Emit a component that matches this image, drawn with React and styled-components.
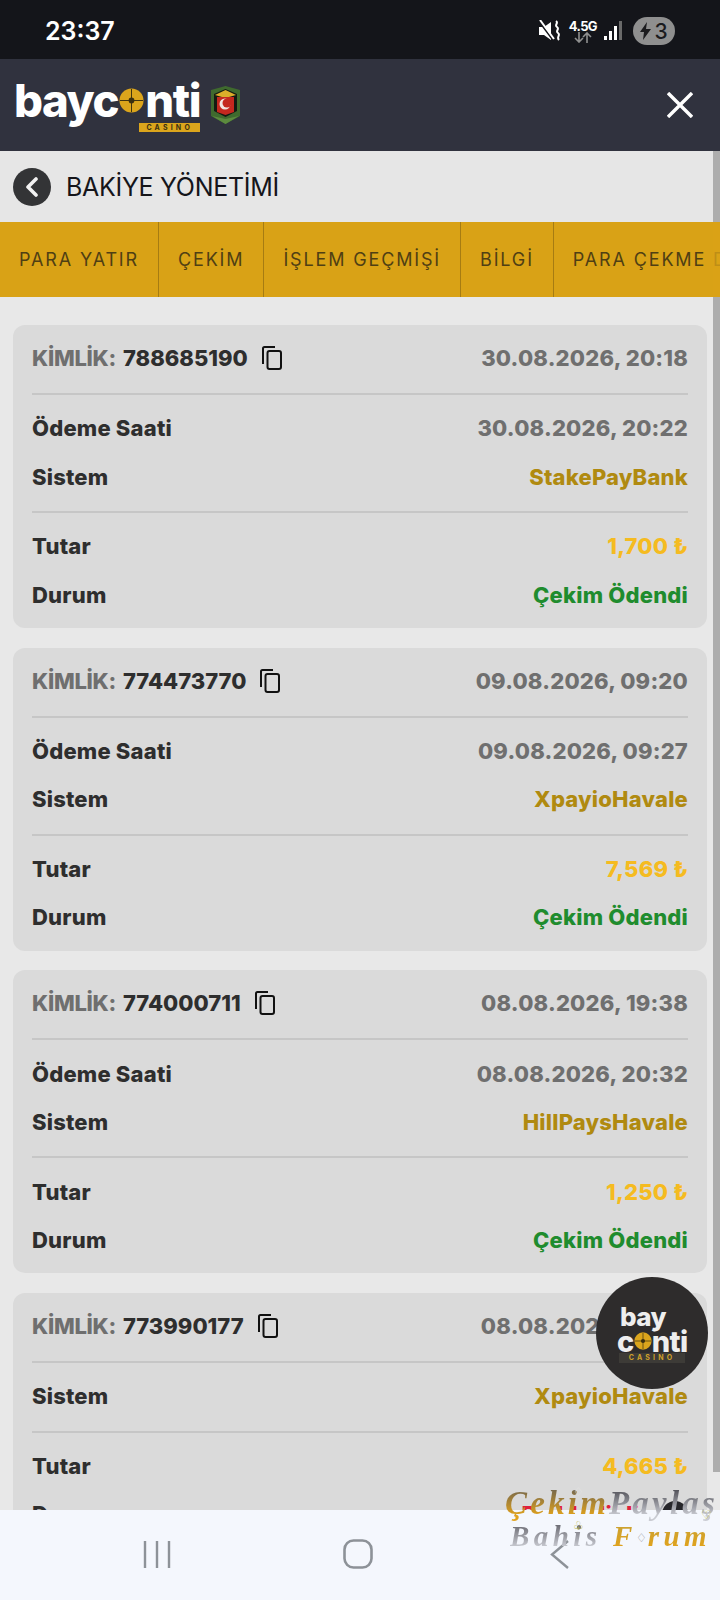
import React from 'react';
import styled, { createGlobalStyle } from 'styled-components';

const GlobalStyle = createGlobalStyle`
	html, body {
		margin: 0;
		padding: 0;
		background: #e8e8e8;
		overflow: hidden;
	}
	* {
		box-sizing: border-box;
	}
`;

const Phone = styled.div`
	position: relative;
	display: flex;
	flex-direction: column;
	width: 720px;
	height: 1600px;
	overflow: hidden;
	font-family: Inter, "Noto Sans", sans-serif;
	background: #e8e8e8;
`;

const StatusBar = styled.div`
	display: flex;
	align-items: center;
	justify-content: space-between;
	height: 59px;
	padding: 3px 45px 0 45px;
	background: #14151a;
	color: #fff;
`;

const Clock = styled.span`
	font-size: 25px;
	font-weight: 600;
`;

const StatusIcons = styled.div`
	display: flex;
	align-items: center;
	gap: 7px;
`;

const NetType = styled.div`
	display: flex;
	flex-direction: column;
	align-items: center;
	margin-left: 2px;
	font-size: 13px;
	font-weight: 700;
	line-height: 12px;
	letter-spacing: -0.6px;
`;

const BatteryPill = styled.div`
	display: flex;
	align-items: center;
	justify-content: center;
	gap: 3px;
	width: 42px;
	height: 28px;
	margin-left: 3px;
	border-radius: 14px;
	background: #8f8f8f;
	color: #1b1b1e;
	font-size: 21px;
	font-weight: 500;
`;

const Header = styled.header`
	display: flex;
	align-items: center;
	justify-content: space-between;
	height: 92px;
	padding: 0 27px 0 14px;
	background: #30323e;
`;

const LogoRow = styled.div`
	display: flex;
	align-items: center;
	gap: 10px;
`;

const LogoStack = styled.div`
	display: flex;
	flex-direction: column;
	align-items: flex-end;
`;

const LogoWord = styled.div`
	display: flex;
	align-items: center;
	height: 44px;
	color: #fff;
	font-size: 45.5px;
	font-weight: 800;
	letter-spacing: -1.4px;
	line-height: 1;
	svg {
		margin: 0 1px;
	}
`;

const CasinoTag = styled.div`
	width: 61px;
	height: 9px;
	background: #dba51c;
	color: #3a3010;
	font-size: 7px;
	font-weight: 700;
	line-height: 9px;
	letter-spacing: 3.2px;
	text-align: center;
`;

const TitleBar = styled.div`
	display: flex;
	align-items: center;
	gap: 15px;
	height: 71px;
	padding: 0 13px;
	background: #e6e6e6;
	color: #15151a;
	font-size: 25px;
	font-weight: 400;
	letter-spacing: -0.3px;
`;

const BackButton = styled.div`
	display: flex;
	align-items: center;
	justify-content: center;
	width: 38px;
	height: 38px;
	border-radius: 50%;
	background: #333436;
`;

const Tabs = styled.nav`
	position: relative;
	z-index: 2;
	display: flex;
	height: 75px;
	overflow: hidden;
	background: #d9a216;

	&::after {
		content: '';
		position: absolute;
		top: 0;
		right: 0;
		width: 7px;
		height: 100%;
		background: #d9a216;
		opacity: 0.8;
	}
`;

const Tab = styled.div`
	display: flex;
	flex-shrink: 0;
	align-items: center;
	padding: 0 19px;
	border-right: 1px solid #a67c12;
	color: #4f3f14;
	font-size: 18px;
	letter-spacing: 1.85px;
	white-space: nowrap;
`;

const List = styled.main`
	display: flex;
	flex: 1;
	flex-direction: column;
	gap: 19.7px;
	min-height: 0;
	padding: 28px 13px 0;
	overflow: hidden;
`;

const Card = styled.section`
	flex-shrink: 0;
	height: 303px;
	padding: 0 19px;
	border-radius: 12px;
	background: #dadada;
`;

const CardHead = styled.div`
	display: flex;
	align-items: center;
	justify-content: space-between;
	height: 68px;
	padding-bottom: 2px;
	font-size: 22px;
	font-weight: 800;
	letter-spacing: 0.2px;
`;

const IdBlock = styled.div`
	display: flex;
	align-items: center;
`;

const IdLabel = styled.span`
	margin-right: 7px;
	color: #6f6f6f;
	letter-spacing: -0.3px;
`;

const IdValue = styled.span`
	margin-right: 14px;
	color: #2e2e2e;
	letter-spacing: 0;
`;

const Group = styled.div`
	padding: 9px 0 10px;
	border-top: 2px solid #c6c6c6;
`;

const Row = styled.div`
	display: flex;
	align-items: center;
	justify-content: space-between;
	height: 48.500px;
	font-size: 22px;
	font-weight: 800;
	letter-spacing: 0.2px;
`;

const RowLabel = styled.span`
	color: #2e2e2e;
`;

const RowValue = styled.span`
	display: flex;
	align-items: center;
	color: ${p => p.$color};
`;

const InfoDot = styled.span`
	width: 26px;
	height: 26px;
	margin-left: 23px;
	border-radius: 50%;
	background: #26262a;
`;

const ScrollThumb = styled.div`
	position: absolute;
	top: 151px;
	right: 0;
	z-index: 1;
	width: 7px;
	height: 1321px;
	background: #adadad;
`;

const Bubble = styled.div`
	position: absolute;
	top: 1277px;
	left: 596px;
	z-index: 3;
	display: flex;
	flex-direction: column;
	align-items: center;
	justify-content: center;
	width: 112px;
	height: 112px;
	padding-top: 2px;
	border-radius: 50%;
	background: #2e2c2c;
`;

const BubbleWord = styled(LogoWord)`
	align-self: flex-start;
	height: 24px;
	margin-left: ${p => p.$indent}px;
	color: #eeeeee;
	font-size: ${p => p.$size}px;
	letter-spacing: -0.6px;
	svg {
		margin: 0;
	}
`;

const BubbleTag = styled.div`
	width: 66px;
	height: 10px;
	background: #3d3b37;
	color: #cfa12a;
	font-size: 7px;
	font-weight: 700;
	line-height: 10px;
	letter-spacing: 3.2px;
	text-align: center;
`;

const BottomNav = styled.footer`
	position: relative;
	z-index: 4;
	display: flex;
	align-items: center;
	justify-content: space-between;
	height: 90px;
	padding: 0 150px 2px 143px;
	background: #f4f7fd;
`;

const HomeIcon = styled.svg`
	margin-right: 5px;
`;

const Watermark = styled.div`
	position: absolute;
	top: 1485px;
	left: 505px;
	z-index: 5;
	display: flex;
	flex-direction: column;
	width: 215px;
	font-family: "Liberation Serif", serif;
	font-style: italic;
	font-weight: 700;
	pointer-events: none;
`;

const MarkLine = styled.div`
	height: ${p => (p.$second ? '30px' : '36px')};
	padding-left: ${p => (p.$second ? '5px' : '0')};
	font-size: ${p => (p.$second ? '29px' : '33px')};
	letter-spacing: ${p => (p.$second ? '4.4px' : '3.2px')};
	line-height: ${p => (p.$second ? '30px' : '36px')};
	white-space: pre;
`;

const MarkWord = styled.span`
	background: linear-gradient(180deg, ${p => p.$from} 15%, ${p => p.$to} 85%);
	-webkit-background-clip: text;
	background-clip: text;
	color: transparent;
`;

const Suit = styled.span`
	position: absolute;
	top: ${p => p.$y}px;
	left: ${p => p.$x}px;
	color: ${p => p.$color};
	font-family: "DejaVu Sans", sans-serif;
	font-size: 12px;
	font-style: normal;
	font-weight: 400;
	line-height: 1;
`;

const Coin = ({ size }) => (
	<svg width={size} height={size} viewBox="0 0 26 26">
		<circle cx="13" cy="13" r="12.5" fill="#dba51c" />
		<circle cx="13" cy="13" r="3" fill="#3a3010" />
		<path d="M13 1v24M1 13h24" stroke="#3a3010" strokeWidth="1" />
	</svg>
);

const Emblem = () => (
	<svg width="31" height="38" viewBox="0 0 31 38">
		<path d="M1 4 15.500 0 30 4v26l-14.500 8L1 30z" fill="#3f6a2e" />
		<path d="M4 8 15.500 3 27 8v17l-11.500 6L4 25z" fill="#141a12" />
		<path d="M5 9 15.500 4 26 9l-10.500 3z" fill="#dcae2a" />
		<path d="M7 11h17v15l-8.500 3L7 26z" fill="#c4281f" />
		<circle cx="15" cy="18" r="5.500" fill="#f2e6e2" />
		<circle cx="17" cy="17" r="4.500" fill="#c4281f" />
		<path d="M2 30l13.500 8L29 30l-13.500 3z" fill="#5c8a3e" />
	</svg>
);

const CopyIcon = () => (
	<svg width="20" height="24" viewBox="0 0 20 24" fill="none" stroke="#111" strokeWidth="2">
		<path d="M13 1H2.500A1.500 1.500 0 0 0 1 2.500V18" />
		<rect x="5.500" y="5" width="13.500" height="18" rx="2" />
	</svg>
);

const rows = [
	{
		id: '788685190',
		date: '30.08.2026, 20:18',
		paid: '30.08.2026, 20:22',
		system: 'StakePayBank',
		amount: '1,700 ₺',
		status: 'Çekim Ödendi',
	},
	{
		id: '774473770',
		date: '09.08.2026, 09:20',
		paid: '09.08.2026, 09:27',
		system: 'XpayioHavale',
		amount: '7,569 ₺',
		status: 'Çekim Ödendi',
	},
	{
		id: '774000711',
		date: '08.08.2026, 19:38',
		paid: '08.08.2026, 20:32',
		system: 'HillPaysHavale',
		amount: '1,250 ₺',
		status: 'Çekim Ödendi',
	},
	{
		id: '773990177',
		date: '08.08.2026, 19:20',
		system: 'XpayioHavale',
		amount: '4,665 ₺',
		status: 'Reddedildi',
		rejected: true,
	},
];

const App = () => {
	return (
		<Phone>
			<GlobalStyle />
			<StatusBar>
				<Clock>23:37</Clock>
				<StatusIcons>
					<svg width="21" height="22" viewBox="0 0 21 22" fill="#fff">
						<path d="M0 7h5l7-5v18l-7-5H0z" />
						<path d="M0 1l14 19" stroke="#14151a" strokeWidth="2" />
						<path d="M1 0l14 19" stroke="#fff" strokeWidth="2" />
						<path d="M17 1c3 2-2 4 1 6s-2 4 1 6-2 4 1 7" fill="none" stroke="#fff" strokeWidth="2" />
					</svg>
					<NetType>
						4.5G
						<svg width="18" height="11" viewBox="0 0 18 11" fill="none" stroke="#8f8f8f" strokeWidth="1.600">
							<path d="M5 0v10M1 6l4 4 4-4M13 11V1M9 5l4-4 4 4" />
						</svg>
					</NetType>
					<svg width="19" height="20" viewBox="0 0 19 20">
						<rect x="0" y="15" width="3" height="4" fill="#fff" />
						<rect x="5" y="10" width="3" height="9" fill="#fff" />
						<rect x="10" y="5" width="3" height="14" fill="#fff" />
						<rect x="15" y="0" width="3" height="19" fill="#6a6a6a" />
					</svg>
					<BatteryPill>
						<svg width="11" height="18" viewBox="0 0 11 18" fill="#1b1b1e">
							<path d="M7 0 0 10h4l-1 8 8-11H6z" />
						</svg>
						3
					</BatteryPill>
				</StatusIcons>
			</StatusBar>

			<Header>
				<LogoRow>
					<LogoStack>
						<LogoWord>
							bayc<Coin size={25} />nti
						</LogoWord>
						<CasinoTag>CASINO</CasinoTag>
					</LogoStack>
					<Emblem />
				</LogoRow>
				<svg width="26" height="26" viewBox="0 0 26 26" stroke="#fff" strokeWidth="3.400">
					<path d="M1 1l24 24M25 1 1 25" />
				</svg>
			</Header>

			<TitleBar>
				<BackButton>
					<svg width="14" height="20" viewBox="0 0 14 20" fill="none" stroke="#f2f2f2" strokeWidth="3.600" strokeLinecap="round" strokeLinejoin="round">
						<path d="M11 2 3 10l8 8" />
					</svg>
				</BackButton>
				BAKİYE YÖNETİMİ
			</TitleBar>

			<Tabs>
				<Tab>PARA YATIR</Tab>
				<Tab>ÇEKİM</Tab>
				<Tab>İŞLEM GEÇMİŞİ</Tab>
				<Tab>BİLGİ</Tab>
				<Tab>PARA ÇEKME DURUMU</Tab>
			</Tabs>

			<List>
				{rows.map(row => (
					<Card key={row.id}>
						<CardHead>
							<IdBlock>
								<IdLabel>KİMLİK:</IdLabel>
								<IdValue>{row.id}</IdValue>
								<CopyIcon />
							</IdBlock>
							<RowValue $color="#6f6f6f">{row.date}</RowValue>
						</CardHead>
						<Group>
							{row.paid && (
								<Row>
									<RowLabel>Ödeme Saati</RowLabel>
									<RowValue $color="#6f6f6f">{row.paid}</RowValue>
								</Row>
							)}
							<Row>
								<RowLabel>Sistem</RowLabel>
								<RowValue $color="#b08a10">{row.system}</RowValue>
							</Row>
						</Group>
						<Group>
							<Row>
								<RowLabel>Tutar</RowLabel>
								<RowValue $color="#f5bb20">{row.amount}</RowValue>
							</Row>
							<Row>
								<RowLabel>Durum</RowLabel>
								<RowValue $color={row.rejected ? '#e0203c' : '#1f8c2e'}>
									{row.status}
									{row.rejected && <InfoDot />}
								</RowValue>
							</Row>
						</Group>
					</Card>
				))}
			</List>

			<ScrollThumb />

			<Bubble>
				<BubbleWord $indent={24} $size={26}>bay</BubbleWord>
				<BubbleWord $indent={21} $size={29}>
					c<Coin size={18} />nti
				</BubbleWord>
				<BubbleTag>CASINO</BubbleTag>
			</Bubble>

			<BottomNav>
				<svg width="28" height="29" viewBox="0 0 28 29" fill="none" stroke="#8d9298" strokeWidth="2.400">
					<path d="M2 1v27M14 1v27M26 1v27" />
				</svg>
				<HomeIcon width="30" height="30" viewBox="0 0 30 30" fill="none" stroke="#8d9298" strokeWidth="2.600">
					<rect x="1.500" y="1.500" width="27" height="27" rx="9" />
				</HomeIcon>
				<svg width="20" height="29" viewBox="0 0 20 29" fill="none" stroke="#8d9298" strokeWidth="2.400">
					<path d="M18 1 2 14.500 18 28" />
				</svg>
			</BottomNav>

			<Watermark>
				<MarkLine>
					<MarkWord $from="#7a6a4a" $to="#e0a21c">Çekim</MarkWord>
					<MarkWord $from="#55555c" $to="#c9cbd2">Paylaş</MarkWord>
				</MarkLine>
				<MarkLine $second>
					<MarkWord $from="#6c6c74" $to="#c9cbd2">Bahis </MarkWord>
					<MarkWord $from="#caa233" $to="#e0a21c">F rum</MarkWord>
				</MarkLine>
				<Suit $x={68} $y={1} $color="#e4e4e4">♢</Suit>
				<Suit $x={68} $y={35} $color="#b9b23a">♧</Suit>
				<Suit $x={196} $y={24} $color="#c9c34a">♡</Suit>
				<Suit $x={131} $y={47} $color="#9a9aa0">♢</Suit>
			</Watermark>
		</Phone>
	);
};

export default App;
